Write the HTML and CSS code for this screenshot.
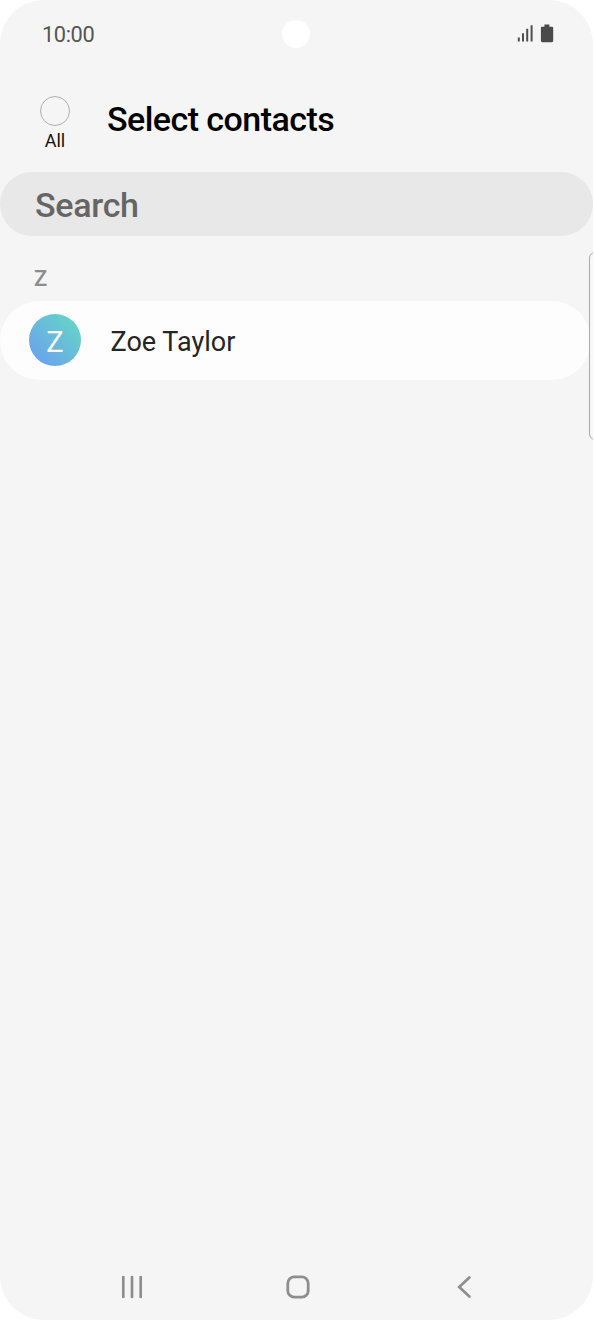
FILE: index.html
```html
<!DOCTYPE html>
<html lang="en">
<head>
<meta charset="utf-8">
<title>Select contacts</title>
<link rel="stylesheet" href="styles.css">
</head>
<body>
<main class="phone">
  <div class="status">
    <span class="time">10:00</span>
    <span class="camera"></span>
    <svg class="status-icons" width="38" height="20" viewBox="0 0 38 20">
      <path d="M1.8 13.6V17.5M6 9.2V17.5M10.2 4.8V17.5M14.6 1.2V17.5" stroke="#4f4f4f" stroke-width="2"/>
      <path d="M24.2 2.8H27.4V.4H32.4V2.8H35Q36.2 2.8 36.2 4V16.8Q36.2 18.2 35 18.2H25.2Q23.9 18.2 23.9 16.8V3.8Z" fill="#4a4a4a"/>
    </svg>
  </div>
  <header class="header">
    <label class="all"><span class="check"></span><span class="all-text">All</span></label>
    <h1 class="title">Select contacts</h1>
  </header>
  <div class="search">Search</div>
  <h2 class="section">Z</h2>
  <div class="contact">
    <span class="avatar">Z</span>
    <span class="name">Zoe Taylor</span>
  </div>
  <div class="edge-panel"></div>
  <nav class="nav">
    <svg width="24" height="26" viewBox="0 0 24 26"><path d="M3.3 3V23M12 3V23M20.7 3V23" stroke="#8e8e8e" stroke-width="2.7" stroke-linecap="round"/></svg>
    <svg width="26" height="26" viewBox="0 0 26 26"><rect x="2.8" y="2.8" width="20.4" height="20.4" rx="6.5" fill="none" stroke="#8e8e8e" stroke-width="2.8"/></svg>
    <svg width="26" height="26" viewBox="0 0 26 26"><path d="M17.4 3.5L7.2 13L17.4 22.5" fill="none" stroke="#8e8e8e" stroke-width="2.7" stroke-linecap="round"/></svg>
  </nav>
</main>
</body>
</html>
```
FILE: styles.css
```css
body {
  margin: 0;
  background: #fff;
  font-family: Roboto, sans-serif;
}
.phone {
  position: relative;
  display: flex;
  flex-direction: column;
  box-sizing: border-box;
  width: 593px;
  height: 1320px;
  background: #f5f5f5;
  border-radius: 44px;
  overflow: hidden;
}
.status {
  display: grid;
  grid-template-columns: 240px 28px 1fr;
  align-items: center;
  height: 68px;
  padding: 0 38px 0 42px;
}
.time {
  font-size: 21.8px;
  letter-spacing: -0.4px;
  color: #555;
}
.camera {
  width: 28px;
  height: 28px;
  border-radius: 50%;
  background: #fff;
}
.status-icons {
  justify-self: end;
}
.header {
  display: flex;
  align-items: center;
  height: 104px;
  padding-left: 40px;
}
.all {
  display: flex;
  flex-direction: column;
  align-items: center;
  width: 30px;
  padding-top: 8px;
}
.check {
  box-sizing: border-box;
  width: 30px;
  height: 30px;
  border: 1.4px solid #b0b0b0;
  border-radius: 50%;
}
.all-text {
  margin-top: 4px;
  font-size: 18px;
  line-height: 22px;
  color: #111;
}
.title {
  margin: 0 0 2px 37px;
  font-size: 34px;
  font-weight: 500;
  line-height: 40px;
  letter-spacing: -0.55px;
  color: #000;
}
.search {
  box-sizing: border-box;
  height: 64px;
  padding-left: 35px;
  border-radius: 32px;
  background: #e8e8e8;
  font-size: 34px;
  font-weight: 500;
  line-height: 67px;
  letter-spacing: -0.3px;
  color: #656565;
}
.section {
  height: 65px;
  margin: 0;
  padding-left: 34px;
  font-size: 22px;
  font-weight: 500;
  line-height: 86px;
  color: #8d8d8d;
}
.contact {
  display: flex;
  align-items: center;
  height: 79px;
  width: 562px;
  padding-left: 29px;
  border-radius: 40px;
  background: #fdfdfd;
}
.avatar {
  width: 52px;
  height: 52px;
  margin-bottom: 1px;
  border-radius: 50%;
  background: linear-gradient(45deg, #6aa5ec 15%, #66cfca 82%);
  font-size: 29px;
  line-height: 56px;
  text-align: center;
  color: #fff;
}
.name {
  margin-left: 29.5px;
  padding-top: 2px;
  font-size: 27px;
  color: #252525;
}
.edge-panel {
  position: absolute;
  top: 252px;
  right: -8px;
  box-sizing: border-box;
  width: 12px;
  height: 188px;
  border: 1px solid #aaa;
  border-radius: 6px;
  background: #f7f7f7;
}
.nav {
  display: flex;
  justify-content: space-between;
  align-items: center;
  height: 66px;
  margin-top: auto;
  padding: 0 115px 0 120px;
}
```
